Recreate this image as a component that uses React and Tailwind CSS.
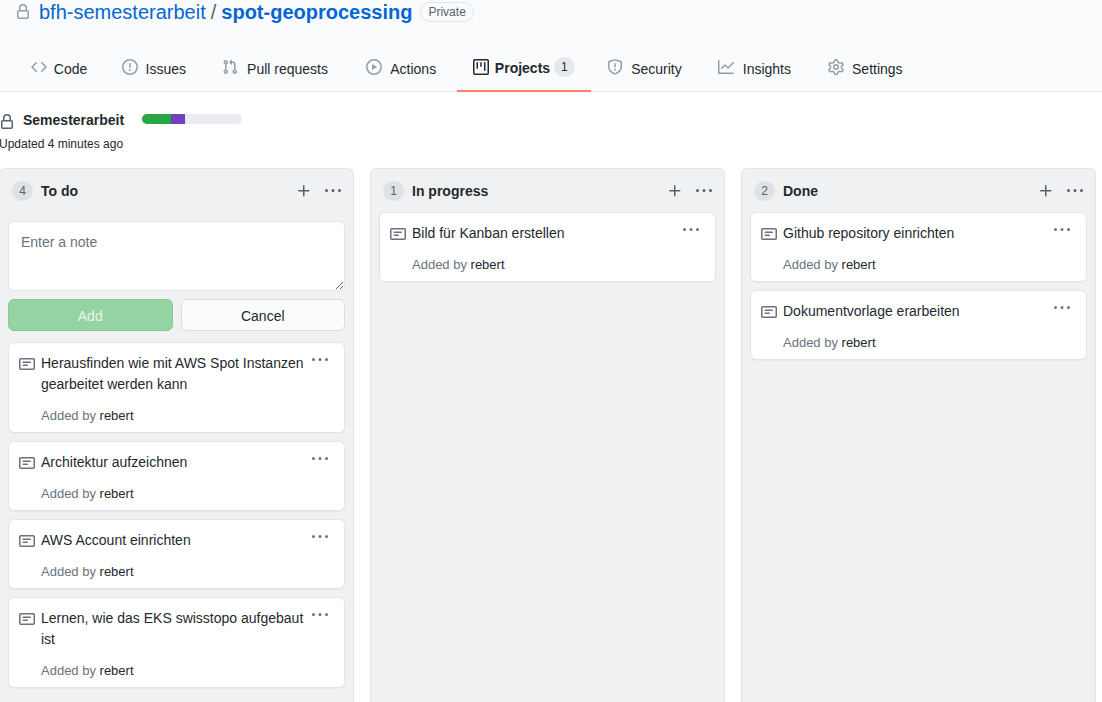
import React from "react";

const PATHS = {
  lock: "M4 4v2h-.25A1.75 1.75 0 002 7.75v5.5c0 .966.784 1.75 1.75 1.75h8.5A1.75 1.75 0 0014 13.25v-5.5A1.75 1.75 0 0012.25 6H12V4a4 4 0 10-8 0zm6.5 2V4a2.5 2.5 0 10-5 0v2h5zM12 7.5h.25a.25.25 0 01.25.25v5.5a.25.25 0 01-.25.25h-8.5a.25.25 0 01-.25-.25v-5.5a.25.25 0 01.25-.25H12z",
  code: "M4.72 3.22a.75.75 0 011.06 1.06L2.06 8l3.72 3.72a.75.75 0 11-1.06 1.06L.47 8.53a.75.75 0 010-1.06l4.25-4.25zm6.56 0a.75.75 0 10-1.06 1.06L13.94 8l-3.72 3.72a.75.75 0 101.06 1.06l4.25-4.25a.75.75 0 000-1.06l-4.25-4.25z",
  issue: "M8 1.5a6.5 6.5 0 100 13 6.5 6.5 0 000-13zM0 8a8 8 0 1116 0A8 8 0 010 8zm9 3a1 1 0 11-2 0 1 1 0 012 0zm-.25-6.25a.75.75 0 00-1.5 0v3.5a.75.75 0 001.5 0v-3.5z",
  pull: "M7.177 3.073L9.573.677A.25.25 0 0110 .854v4.792a.25.25 0 01-.427.177L7.177 3.427a.25.25 0 010-.354zM3.75 2.5a.75.75 0 100 1.5.75.75 0 000-1.5zm-2.25.75a2.25 2.25 0 113 2.122v5.256a2.251 2.251 0 11-1.5 0V5.372A2.25 2.25 0 011.5 3.25zM11 2.5h-1V4h1a1 1 0 011 1v5.628a2.251 2.251 0 101.5 0V5A2.5 2.5 0 0011 2.5zm1 10.25a.75.75 0 111.5 0 .75.75 0 01-1.5 0zM3.75 12a.75.75 0 100 1.5.75.75 0 000-1.5z",
  play: "M1.5 8a6.5 6.5 0 1113 0 6.5 6.5 0 01-13 0zM8 0a8 8 0 100 16A8 8 0 008 0zM6.379 5.227A.25.25 0 006 5.442v5.117a.25.25 0 00.379.214l4.264-2.559a.25.25 0 000-.428L6.379 5.227z",
  project: "M1.75 0A1.75 1.75 0 000 1.75v12.5C0 15.216.784 16 1.75 16h12.5A1.75 1.75 0 0016 14.25V1.75A1.75 1.75 0 0014.25 0H1.75zM1.5 1.75a.25.25 0 01.25-.25h12.5a.25.25 0 01.25.25v12.5a.25.25 0 01-.25.25H1.75a.25.25 0 01-.25-.25V1.75zM11.75 3a.75.75 0 00-.75.75v7.5a.75.75 0 001.5 0v-7.5a.75.75 0 00-.75-.75zm-8.25.75a.75.75 0 011.5 0v5.5a.75.75 0 01-1.5 0v-5.5zM8 3a.75.75 0 00-.75.75v3.5a.75.75 0 001.5 0v-3.5A.75.75 0 008 3z",
  shield: "M7.467.133a1.75 1.75 0 011.066 0l5.25 1.68A1.75 1.75 0 0115 3.48V7c0 1.566-.32 3.182-1.303 4.682-.983 1.498-2.585 2.813-5.032 3.855a1.7 1.7 0 01-1.33 0c-2.447-1.042-4.049-2.357-5.032-3.855C1.32 10.182 1 8.566 1 7V3.48a1.75 1.75 0 011.217-1.667l5.25-1.68zm.61 1.429a.25.25 0 00-.153 0l-5.25 1.68a.25.25 0 00-.174.238V7c0 1.358.275 2.666 1.057 3.86.784 1.194 2.121 2.34 4.366 3.297a.2.2 0 00.154 0c2.245-.956 3.582-2.104 4.366-3.298C13.225 9.666 13.5 8.36 13.5 7V3.48a.25.25 0 00-.174-.237l-5.25-1.68zM9 10.5a1 1 0 11-2 0 1 1 0 012 0zm-.25-5.75a.75.75 0 10-1.5 0v3a.75.75 0 001.5 0v-3z",
  graph: "M1.5 1.75a.75.75 0 00-1.5 0v12.5c0 .414.336.75.75.75h14.5a.75.75 0 000-1.5H1.5V1.75zm14.28 2.53a.75.75 0 00-1.06-1.06L10 7.94 7.53 5.47a.75.75 0 00-1.06 0L3.22 8.72a.75.75 0 001.06 1.06L7 7.06l2.47 2.47a.75.75 0 001.06 0l5.25-5.25z",
  plus: "M7.75 2a.75.75 0 01.75.75V7h4.25a.75.75 0 110 1.5H8.5v4.25a.75.75 0 11-1.5 0V8.5H2.75a.75.75 0 010-1.5H7V2.75A.75.75 0 017.75 2z",
  kebab: "M8 9a1.5 1.5 0 100-3 1.5 1.5 0 000 3zM1.5 9a1.5 1.5 0 100-3 1.5 1.5 0 000 3zm13 0a1.5 1.5 0 100-3 1.5 1.5 0 000 3z",
  note: "M0 3.75C0 2.784.784 2 1.75 2h12.5c.966 0 1.75.784 1.75 1.75v8.5A1.75 1.75 0 0114.25 14H1.75A1.75 1.75 0 010 12.25v-8.5zm1.75-.25a.25.25 0 00-.25.25v8.5c0 .138.112.25.25.25h12.5a.25.25 0 00.25-.25v-8.5a.25.25 0 00-.25-.25H1.75zM3.5 6.25a.75.75 0 01.75-.75h7a.75.75 0 010 1.5h-7a.75.75 0 01-.75-.75zm.75 2.25a.75.75 0 000 1.5h4a.75.75 0 000-1.5h-4z",
};

function Icon({ name, className = "" }) {
  return (
    <svg viewBox="0 0 16 16" fill="currentColor" fillRule="evenodd" aria-hidden="true" className={`size-4 shrink-0 ${className}`}>
      <path d={PATHS[name]} />
    </svg>
  );
}

function GearIcon() {
  return (
    <svg
      viewBox="0 0 16 16"
      fill="none"
      stroke="currentColor"
      strokeWidth="1.5"
      strokeLinejoin="round"
      aria-hidden="true"
      className="size-4 shrink-0 text-[#959da5]"
    >
      <path d="M7.4.8h1.2q.6.1.8.7l.3 1.1q.2.7.9 1l.5.3q.5.3 1.1.1l1.1-.3q.6-.2.9.3l.7 1.2q.2.5-.2.9l-.8.8q-.5.5-.4 1.1v.4q-.1.6.4 1.1l.8.8q.4.4.2.9l-.7 1.2q-.3.5-.9.3l-1.1-.3q-.6-.2-1.1.1l-.5.3q-.7.3-.9 1l-.3 1.1q-.2.6-.8.7H7.4q-.6-.1-.8-.7l-.3-1.1q-.2-.7-.9-1l-.5-.3q-.5-.3-1.1-.1l-1.1.3q-.6.2-.9-.3l-.7-1.2q-.2-.5.2-.9l.8-.8q.5-.5.4-1.1v-.4q.1-.6-.4-1.1l-.8-.8q-.4-.4-.2-.9l.7-1.2q.3-.5.9-.3l1.1.3q.6.2 1.1-.1l.5-.3q.7-.3.9-1l.3-1.1q.2-.6.8-.7z" />
      <circle cx="8" cy="8" r="2.25" />
    </svg>
  );
}

const TABS = [
  { label: "Code", icon: "code" },
  { label: "Issues", icon: "issue" },
  { label: "Pull requests", icon: "pull" },
  { label: "Actions", icon: "play" },
  { label: "Projects", icon: "project", count: 1, active: true },
  { label: "Security", icon: "shield" },
  { label: "Insights", icon: "graph" },
  { label: "Settings", icon: "gear" },
];

const COLUMNS = [
  {
    title: "To do",
    form: true,
    cards: [
      "Herausfinden wie mit AWS Spot Instanzen gearbeitet werden kann",
      "Architektur aufzeichnen",
      "AWS Account einrichten",
      "Lernen, wie das EKS swisstopo aufgebaut ist",
    ],
  },
  { title: "In progress", cards: ["Bild für Kanban erstellen"] },
  { title: "Done", cards: ["Github repository einrichten", "Dokumentvorlage erarbeiten"] },
];

// The bold pseudo-element reserves the width a label has when its tab is selected.
function Tab({ label, icon, count, active }) {
  return (
    <a
      href="#"
      aria-current={active ? "page" : undefined}
      className={`flex items-center border-b-2 pl-4 text-sm leading-5 whitespace-nowrap ${
        active ? "border-[#f9826c] pr-4 font-bold" : "border-transparent pr-[18px]"
      }`}
    >
      {icon === "gear" ? <GearIcon /> : <Icon name={icon} className={active ? "" : "text-[#959da5]"} />}
      <span
        data-content={label}
        className={`ml-[6px] text-center before:invisible before:block before:h-0 before:overflow-hidden before:font-bold before:content-[attr(data-content)] ${
          active ? "pt-px" : "pt-[3px]"
        }`}
      >
        {label}
      </span>
      {count !== undefined && (
        <span className="ml-1 h-5 min-w-5 rounded-full bg-[#e6e8eb] px-[7px] text-center text-xs leading-5 font-normal">{count}</span>
      )}
    </a>
  );
}

function Card({ text }) {
  return (
    <article className="flex rounded-md border border-[#e1e4e8] bg-white pr-4 pb-[6px] pl-[10px] shadow-[0_1px_0_rgba(27,31,35,0.04)]">
      <Icon name="note" className="mt-[13px] text-[#6a737d]" />
      <div className="ml-[6px] min-w-0 flex-1 pt-[10px]">
        <p className="text-sm leading-[21px]">{text}</p>
        <p className="mt-[10px] text-[13px] leading-[21px] text-[#6a737d]">
          Added by <a href="#" className="text-[#24292e]">rebert</a>
        </p>
      </div>
      <button type="button" aria-label="Card menu" className="mt-[9px] h-4 text-[#6a737d]">
        <Icon name="kebab" />
      </button>
    </article>
  );
}

function NoteForm() {
  return (
    <form className="mt-[9px] mb-[3px]" onSubmit={(e) => e.preventDefault()}>
      <textarea
        aria-label="Enter a note"
        placeholder="Enter a note"
        className="block h-[70px] w-full resize-y rounded-md border border-[#e1e4e8] bg-white px-3 py-[10px] text-sm leading-[21px] placeholder:text-[#6a737d]"
      />
      <div className="mt-2 grid grid-cols-2 gap-2 text-sm leading-5">
        <button type="submit" disabled className="h-8 rounded-md border border-[#86c996] bg-[#94d3a2] pt-px text-white/80">
          Add
        </button>
        <button type="button" className="h-8 rounded-md border border-[#d9dce0] bg-[#fafbfc] pt-px">
          Cancel
        </button>
      </div>
    </form>
  );
}

function Column({ title, cards, form }) {
  return (
    <section className="flex min-w-0 flex-1 flex-col rounded-t-md border border-b-0 border-[#e1e4e8] bg-[#eff1f3] px-2">
      <div className="flex h-[43px] shrink-0 items-center pl-1">
        <span className="h-5 min-w-[21px] rounded-full bg-[#dfe2e5] px-[6px] text-center text-xs leading-5 text-[#586069]">{cards.length}</span>
        <h2 className="ml-2 flex-1 text-sm leading-5 font-bold">{title}</h2>
        <button type="button" aria-label={`Add a note to ${title}`} className="text-[#586069]">
          <Icon name="plus" />
        </button>
        <button type="button" aria-label={`${title} menu`} className="mr-1 ml-[13px] text-[#586069]">
          <Icon name="kebab" />
        </button>
      </div>
      <div className="flex flex-col gap-2 pb-2">
        {form && <NoteForm />}
        {cards.map((text) => (
          <Card key={text} text={text} />
        ))}
      </div>
    </section>
  );
}

export default function App() {
  return (
    <div className="flex min-h-screen flex-col overflow-x-hidden bg-white font-['Liberation_Sans',Arial,sans-serif] text-[#24292e]">
      <header className="border-b border-[#e1e4e8] bg-[#fafbfc]">
        <div className="flex h-6 items-center pl-[15px]">
          <Icon name="lock" className="text-[#959da5]" />
          <h1 className="ml-2 flex items-center text-xl leading-6">
            <a href="#" className="text-[#0366d6]">bfh-semesterarbeit</a>
            <span className="mx-[5px] text-[#586069]">/</span>
            <a href="#" className="font-bold text-[#0366d6]">spot-geoprocessing</a>
          </h1>
          <span className="ml-2 h-5 rounded-full border border-[#e1e4e8] px-[7px] text-xs leading-[18px] text-[#586069]">Private</span>
        </div>
        <nav aria-label="Repository" className="mt-5 -mb-px flex h-12 pl-[15px]">
          {TABS.map((tab) => (
            <Tab key={tab.label} {...tab} />
          ))}
        </nav>
      </header>
      <main className="-ml-px flex flex-1 flex-col">
        <div className="pt-[18px]">
          <div className="flex h-5 items-center">
            <Icon name="lock" className="mt-[3px] text-[#586069]" />
            <h2 className="ml-2 text-sm leading-5 font-bold">Semesterarbeit</h2>
            <div role="img" aria-label="Project progress" className="mb-[2px] ml-[18px] flex h-[10px] w-[100px] overflow-hidden rounded-full bg-[#eaecef]">
              <span className="w-[29px] bg-[#28a745]" />
              <span className="w-[14px] bg-[#6f42c1]" />
            </div>
          </div>
          <p className="mt-1 text-xs leading-5">Updated 4 minutes ago</p>
        </div>
        <div className="mt-[14px] flex flex-1 gap-4 pr-[6px]">
          {COLUMNS.map((column) => (
            <Column key={column.title} {...column} />
          ))}
        </div>
      </main>
    </div>
  );
}
